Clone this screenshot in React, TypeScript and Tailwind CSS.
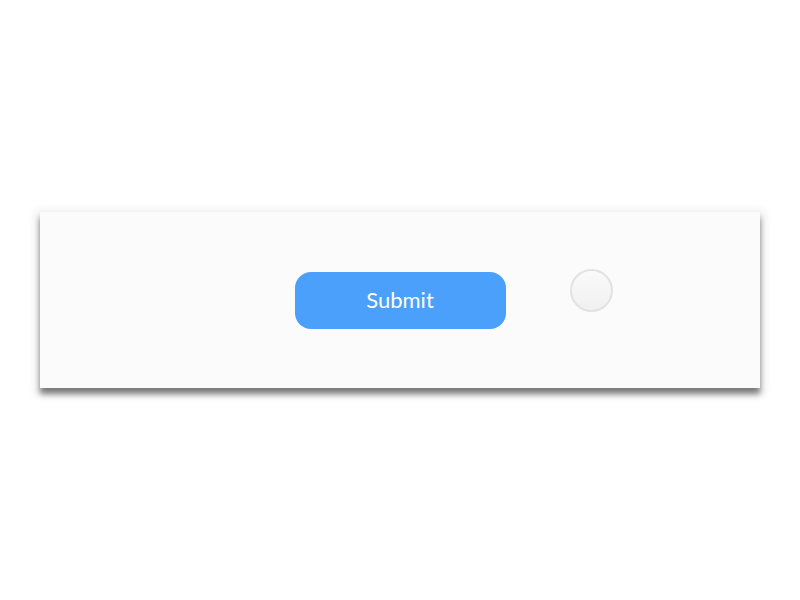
import React from 'react';

const App = () => {
  return (
    <div className="flex h-screen w-full items-center justify-center bg-white">
      <div className="grid h-[176px] w-[720px] grid-cols-[1fr_auto_1fr] items-center bg-[#fbfbfb] shadow-[0_6px_6px_rgba(0,0,0,0.5),0_2px_8px_5px_rgba(0,0,0,0.06)]">
        <div></div>
        <button className="mt-[1px] h-[57px] w-[211px] rounded-[16px] bg-[#4ba0fb] pb-[3px] text-[22px] font-normal text-white font-['Lato','Open_Sans',sans-serif]">
          Submit
        </button>
        <div className="flex">
          <span className="ml-[64px] -mt-[20px] h-[43px] w-[43px] rounded-full border-2 border-[#e2e2e2] bg-gradient-to-b from-[#fafafa] to-[#f0f0f0]"></span>
        </div>
      </div>
    </div>
  );
};

export default App;
